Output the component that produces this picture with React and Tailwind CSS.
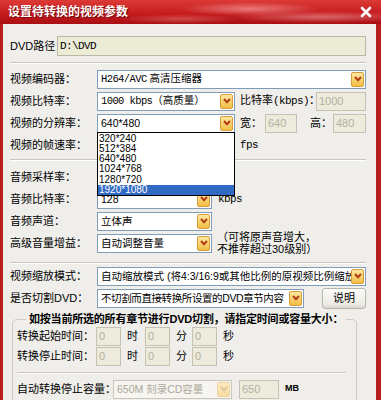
import React from "react";

const font = "font-['Liberation_Sans','Noto_Sans_CJK_SC',sans-serif]";
const mono = "font-['Liberation_Mono','Noto_Sans_CJK_SC',monospace] tracking-[-0.6px]";

function DropButton({ faded }) {
  return (
    <span
      className={`flex h-[15px] w-[13px] shrink-0 items-center justify-center rounded-[2px] border ${
        faded
          ? "border-[#ead3a4] bg-[linear-gradient(#fcebc0,#f6dc9c)]"
          : "border-[#d99c3c] bg-[linear-gradient(#fde8a0,#f2be45)]"
      }`}
    >
      <svg width="8" height="6" viewBox="0 0 8 6">
        <path
          d="M1 1 L4 4.2 L7 1"
          fill="none"
          stroke={faded ? "#e6c2a8" : "#b33c16"}
          strokeWidth="2"
        />
      </svg>
    </span>
  );
}

function Select({ children, className = "", faded }) {
  return (
    <div
      className={`flex h-[19px] items-center border pl-[3px] pr-[1px] text-[10.5px] ${
        faded ? "border-[#c9c7ba] bg-[#f6f5f1] text-[#aca899]" : "border-[#7f9db9] bg-white text-black"
      } ${className}`}
    >
      <span className="flex-1 overflow-hidden whitespace-nowrap leading-[17px]">{children}</span>
      <DropButton faded={faded} />
    </div>
  );
}

function Box({ value, className = "" }) {
  return (
    <div
      className={`h-[19px] shrink-0 border border-[#c4c2b3] bg-[#ecebdc] pl-[2px] text-[#b4b1a2] leading-[17px] ${className}`}
    >
      {value}
    </div>
  );
}

function Sep({ className = "" }) {
  return <div className={`h-[2px] border-t border-[#c9c6b8] border-b border-b-white ${className}`} />;
}

function Row({ label, children, className = "" }) {
  return (
    <div className={`flex h-[22px] items-center ${className}`}>
      <span className="w-[87px] shrink-0 whitespace-nowrap">{label}</span>
      {children}
    </div>
  );
}

const resolutions = ["320*240", "512*384", "640*480", "1024*768", "1280*720", "1920*1080"];

export default function App() {
  return (
    <div className={`flex h-[400px] w-[381px] flex-col overflow-hidden bg-[#b91e1f] text-[11px] text-black ${font}`}>
      {/* title bar */}
      <div className="flex h-[24px] shrink-0 items-center justify-between bg-[radial-gradient(ellipse_70px_7px_at_250px_9px,rgba(255,190,190,0.55),transparent),radial-gradient(ellipse_90px_6px_at_320px_17px,rgba(255,200,200,0.45),transparent),radial-gradient(ellipse_60px_5px_at_180px_19px,rgba(255,170,170,0.35),transparent),linear-gradient(to_bottom,#dc3a36,#c61c1e_55%,#a90f13)] pl-[8px] pr-[9px]">
        <span className="text-[12px] font-bold text-white [text-shadow:1px_1px_0_#7a0a0a]">设置待转换的视频参数</span>
        <svg width="12" height="12" viewBox="0 0 12 12">
          <path d="M2 2 L10 10 M10 2 L2 10" stroke="#fff" strokeWidth="2.6" strokeLinecap="round" />
        </svg>
      </div>

      {/* client area */}
      <div className="ml-[3px] mr-[5px] flex flex-1 flex-col bg-[#efeeea] pl-[7px] pr-[10px]">
        <div className="mt-[12px] flex h-[20px] items-center">
          <span className="w-[47px] shrink-0 whitespace-nowrap">DVD路径：</span>
          <div className={`h-[20px] flex-1 border border-[#b9b7a6] bg-[#ecebd6] pl-[2px] leading-[18px] ${mono}`}>D:\DVD</div>
        </div>
        <Sep className="mt-[6px]" />

        <div className="mt-[4px] flex flex-col">
          <Row label="视频编码器：">
            <Select className="flex-1">
              <span className={mono}>H264/AVC</span> 高清压缩器
            </Select>
          </Row>
          <Row label="视频比特率：">
            <Select className="w-[138px]">
              <span className={mono}>1000 kbps</span>（高质量）
            </Select>
            <span className="ml-[5px] w-[76px] whitespace-nowrap">
              比特率<span className={mono}>(kbps)</span>：
            </span>
            <Box value="1000" className="flex-1" />
          </Row>
          <Row label="视频的分辨率：">
            <div className="relative w-[138px]">
              <Select className="w-full">640*480</Select>
              <div className="absolute left-0 top-[18px] z-10 w-full border border-black bg-white pt-[1px] text-[10px]">
                {resolutions.map((r) => (
                  <div
                    key={r}
                    className={`h-[10.3px] pl-[1px] leading-[10.3px] ${
                      r === "1920*1080" ? "bg-[#316ac5] text-white" : ""
                    }`}
                  >
                    {r}
                  </div>
                ))}
              </div>
            </div>
            <span className="ml-[5px] w-[25px]">宽：</span>
            <Box value="640" className="w-[32px]" />
            <span className="ml-[13px] w-[23px]">高：</span>
            <Box value="480" className="flex-1" />
          </Row>
          <Row label="视频的帧速率：">
            <Select className="w-[138px]">25</Select>
            <span className={`ml-[5px] ${mono}`}>fps</span>
          </Row>
        </div>
        <Sep className="mt-[3px]" />

        <div className="mt-[5px] flex flex-col">
          <Row label="音频采样率：">
            <Select className="w-[115px]">44100</Select>
            <span className={`ml-[6px] ${mono}`}>Hz</span>
          </Row>
          <Row label="音频比特率：">
            <Select className="w-[115px]">128</Select>
            <span className={`ml-[6px] ${mono}`}>kbps</span>
          </Row>
          <Row label="音频声道：">
            <Select className="w-[115px]">立体声</Select>
          </Row>
          <Row label="高级音量增益：">
            <Select className="w-[115px]">自动调整音量</Select>
            <span className="ml-[5px] whitespace-nowrap leading-[12px]">
              （可将原声音增大，
              <br />
              不推荐超过30级别）
            </span>
          </Row>
        </div>
        <Sep className="mt-[8px]" />

        <div className="mt-[1px] flex flex-col">
          <Row label="视频缩放模式：">
            <Select className="min-w-0 flex-1">自动缩放模式 (将4:3/16:9或其他比例的原视频比例缩放到目标比例)</Select>
          </Row>
          <Row label="是否切割DVD：">
            <Select className="w-[207px]">
              <span className="tracking-[-0.4px]">不切割而直接转换所设置的DVD章节内容</span>
            </Select>
            <button className="ml-auto h-[21px] w-[44px] rounded-[3px] border border-[#b7b6ad] bg-[linear-gradient(#fdfdfb,#ecebe4_80%,#d8d7cf)] text-[11px] text-black">
              说明
            </button>
          </Row>
        </div>

        <fieldset className="ml-[2px] mr-[9px] mt-[3px] rounded-[5px] border border-[#cfcdbf] pb-[10px] pl-[4px] pr-[10px]">
          <legend className="ml-[9px] whitespace-nowrap px-[3px] text-[11px] font-bold leading-[14px] tracking-[-0.2px]">
            如按当前所选的所有章节进行DVD切割，请指定时间或容量大小：
          </legend>
          {["转换起始时间：", "转换停止时间："].map((l) => (
            <div key={l} className="flex h-[20px] items-center">
              <span className="w-[79px] shrink-0 whitespace-nowrap">{l}</span>
              <Box value="0" className="h-[17px] w-[25px] leading-[15px]" />
              <span className="ml-[6px] w-[18px]">时</span>
              <Box value="0" className="h-[17px] w-[25px] leading-[15px]" />
              <span className="ml-[6px] w-[16px]">分</span>
              <Box value="0" className="h-[17px] w-[25px] leading-[15px]" />
              <span className="ml-[6px]">秒</span>
            </div>
          ))}
          <Sep className="mt-[6px]" />
          <div className="mt-[4px] flex h-[22px] items-center">
            <span className="w-[96px] shrink-0 whitespace-nowrap">自动转换停止容量：</span>
            <Select faded className="h-[18px] w-[119px]">650M 刻录CD容量</Select>
            <Box value="650" className="ml-[7px] h-[18px] w-[40px] leading-[16px]" />
            <span className="ml-[6px] text-[9px] font-bold">MB</span>
          </div>
        </fieldset>
      </div>
    </div>
  );
}
